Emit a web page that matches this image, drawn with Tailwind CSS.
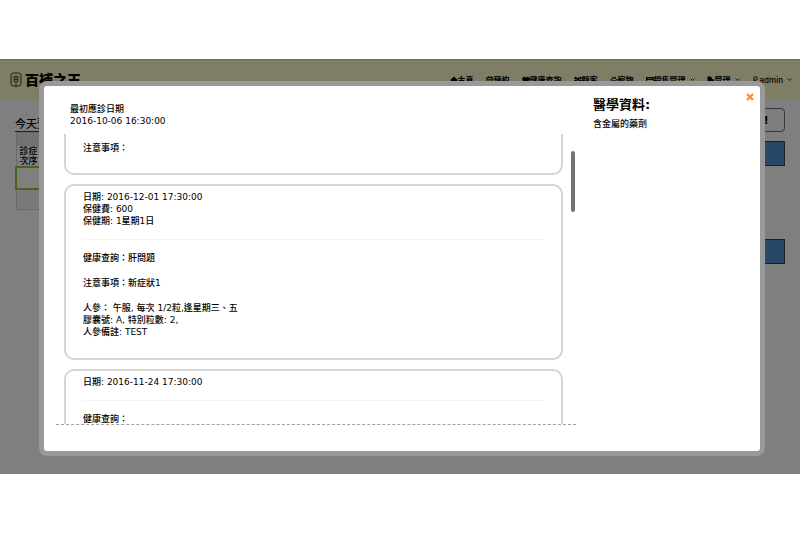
<!DOCTYPE html>
<html lang="zh-Hant">
<head>
  <meta charset="UTF-8" />
  <meta name="viewport" content="width=device-width, initial-scale=1" />
  <title>百補之王</title>
  <script src="https://cdn.jsdelivr.net/npm/@tailwindcss/browser@4"></script>
</head>

<body class="bg-white pt-[59px] pb-[58px] text-[9px] leading-3 font-medium text-black font-['DejaVu_Sans','Noto_Sans_CJK_TC',sans-serif]">

  <div class="grid">

    <!-- Page behind the dialog -->
    <div class="col-start-1 row-start-1 min-w-0 bg-white font-['Inter','Noto_Sans_CJK_TC',sans-serif]">
      <header class="flex h-10 items-center justify-between border-t border-slate-300 bg-[#fffbca] pr-2 pl-[10px]">
        <a href="#" class="flex items-center gap-[3px]">
          <svg class="h-4 w-3" viewBox="0 0 12 16" fill="none" stroke="#333">
            <rect x="1" y="1" width="10" height="13" rx="2.500" />
            <path d="M6 3v12.500M3.500 5h5M3.500 7.500h5M4 10h4M4 4v6M8 4v6" stroke="#70483c" stroke-width=".9" />
          </svg>
          <span class="text-[14px] leading-4 font-black">百補之王</span>
        </a>
        <nav>
          <ul class="flex items-center gap-3 text-[8px] font-semibold">
            <li><a href="#" class="flex items-center">
              <svg class="size-2" viewBox="0 0 8 8"><path d="M4 .5 0 4.300h1V8h2.300V5.300h1.400V8H7V4.300h1z" /></svg>主頁</a></li>
            <li><a href="#" class="flex items-center">
              <svg class="size-2" viewBox="0 0 8 8" fill="none" stroke="#000"><path d="M.8 1.500h6v5.700h-6zM.8 3.200h6M2.500 0v2M5.200 0v2M3 3.500v3M5 3.500v3" stroke-width=".9" /></svg>預約</a></li>
            <li><a href="#" class="flex items-center">
              <svg class="size-2" viewBox="0 0 8 8"><path d="M4 7.600.6 4.200C-.9 2.200 1.800-.6 4 1.700 6.200-.6 8.900 2.200 7.400 4.200z" /></svg>健康查詢</a></li>
            <li><a href="#" class="flex items-center">
              <svg class="size-2" viewBox="0 0 8 8"><circle cx="1.500" cy="2" r="1.200" /><circle cx="6.500" cy="2" r="1.200" /><circle cx="4" cy="3" r="1.600" /><path d="M0 6V4.500L1.500 3.500 4 5l2.500-1.500L8 4.500V6H6.500v1.500h-5V6z" /></svg>顧客</a></li>
            <li><a href="#" class="flex items-center">
              <svg class="size-2" viewBox="0 0 8 8"><ellipse cx="4" cy="5.800" rx="2.200" ry="1.800" /><circle cx="1.300" cy="3.800" r=".9" /><circle cx="6.700" cy="3.800" r=".9" /><ellipse cx="2.900" cy="1.900" rx=".8" ry="1.200" /><ellipse cx="5.100" cy="1.900" rx=".8" ry="1.200" /></svg>寵物</a></li>
            <li><a href="#" class="flex items-center">
              <svg class="size-2" viewBox="0 0 8 8" fill="none" stroke="#000"><path d="M.5 1.500h7v5.300h-7z" /><path d="M.5 3.200h7" stroke-width="1.400" /></svg>銷售管理
              <svg class="ml-1 size-[5px]" viewBox="0 0 5 5" fill="none" stroke="#000"><path d="M.5 1.500l2 2 2-2" stroke-width=".8" /></svg></a></li>
            <li><a href="#" class="flex items-center">
              <svg class="size-2" viewBox="0 0 8 8"><path d="M.5.500h3L5 2v4.500H.5zM4 3h2l1.500 1.500V8H3V5z" /></svg>管理
              <svg class="ml-1 size-[5px]" viewBox="0 0 5 5" fill="none" stroke="#000"><path d="M.5 1.500l2 2 2-2" stroke-width=".8" /></svg></a></li>
            <li><a href="#" class="flex items-center font-medium">
              <svg class="size-2" viewBox="0 0 8 8" fill="none" stroke="#000"><circle cx="3.500" cy="2.500" r="1.700" /><path d="M.5 7.500c0-3 2-3 3-3M5 6.500h3" /></svg>admin
              <svg class="ml-1 size-[5px]" viewBox="0 0 5 5" fill="none" stroke="#000"><path d="M.5 1.500l2 2 2-2" stroke-width=".8" /></svg></a></li>
          </ul>
        </nav>
      </header>

      <div class="flex justify-between px-[15px]">
        <section class="pt-[18px]">
          <h2 class="border-b border-neutral-700 text-[11px] leading-[14px]">今天預約</h2>
          <table class="w-20 border border-neutral-300 text-left leading-[10px]">
            <thead>
              <tr class="bg-neutral-200"><td class="h-[13px]"></td></tr>
              <tr><th class="h-5 pl-[3px] align-bottom font-medium"><span class="block">診症</span><span class="block">次序</span></th></tr>
            </thead>
            <tbody>
              <tr><td class="h-[22px] border-2 border-[#9bc43c]"></td></tr>
              <tr><td class="h-[21px] bg-neutral-100"></td></tr>
            </tbody>
          </table>
        </section>
        <section class="flex w-20 flex-col pt-[9px]">
          <button type="button" class="h-6 rounded-[4px] border border-neutral-500 bg-neutral-50 pr-4 text-right text-[10px] font-black">更新!</button>
          <div class="mt-[9px] h-[25px] border border-neutral-700 bg-[#5090cf]"></div>
          <div class="mt-[73px] h-[25px] border border-neutral-700 bg-[#5090cf]"></div>
        </section>
      </div>
    </div>

    <!-- Backdrop and dialog -->
    <div class="z-10 col-start-1 row-start-1 bg-black/50 pt-[22px] pr-[35px] pb-[18px] pl-[39px]">
      <div role="dialog" aria-labelledby="medical" class="relative rounded-lg bg-[#999] p-[5px]">
        <div class="flex gap-[17px] rounded-[3px] bg-white pt-[17px] pb-[26px] pl-3">

          <div class="min-w-0 flex-1">
            <div class="pl-[14px]">
              <p>最初應診日期</p>
              <p>2016-10-06 16:30:00</p>
            </div>

            <div class="relative mt-[7px] flex h-[291px] flex-col gap-[9px] overflow-hidden border-b border-dashed border-neutral-400 pr-[13px] pl-2">
              <article class="shrink-0 rounded-b-[10px] border-2 border-t-0 border-neutral-300 px-[17px] pt-2 pb-[19px]">
                <p>注意事項：</p>
              </article>

              <article class="shrink-0 rounded-[10px] border-2 border-neutral-300 px-[17px] pt-[5px] pb-5">
                <p>日期: 2016-12-01 17:30:00</p>
                <p>保健費: 600</p>
                <p>保健期: 1星期1日</p>
                <hr class="mt-3 mb-3 border-neutral-100">
                <p>健康查詢：肝問題</p>
                <p class="mt-[13px]">注意事項：新症狀1</p>
                <p class="mt-[13px]">人參： 午服, 每次 1/2粒,逢星期三、五</p>
                <p>膠囊號: A, 特別粒數: 2,</p>
                <p>人參備註: TEST</p>
              </article>

              <article class="shrink-0 rounded-t-[10px] border-2 border-neutral-300 px-[17px] pt-[5px] pb-5">
                <p>日期: 2016-11-24 17:30:00</p>
                <hr class="mt-3 mb-3 border-neutral-100">
                <p>健康查詢：</p>
              </article>

              <span class="absolute top-[17px] right-px h-[61px] w-1 rounded-full bg-neutral-500"></span>
            </div>
          </div>

          <aside class="w-[167px] shrink-0">
            <h2 id="medical" class="-mt-1.5 text-[13px] leading-4 font-bold">醫學資料:</h2>
            <p class="mt-[5px]">含金屬的藥劑</p>
          </aside>
        </div>

        <button type="button" aria-label="關閉" class="absolute top-3 right-[11px]">
          <svg class="size-2" viewBox="0 0 8 8" stroke="#f29435" stroke-width="2.400"><path d="M1 1l6 6M7 1 1 7" /></svg>
        </button>
      </div>
    </div>
  </div>

</body>
</html>
